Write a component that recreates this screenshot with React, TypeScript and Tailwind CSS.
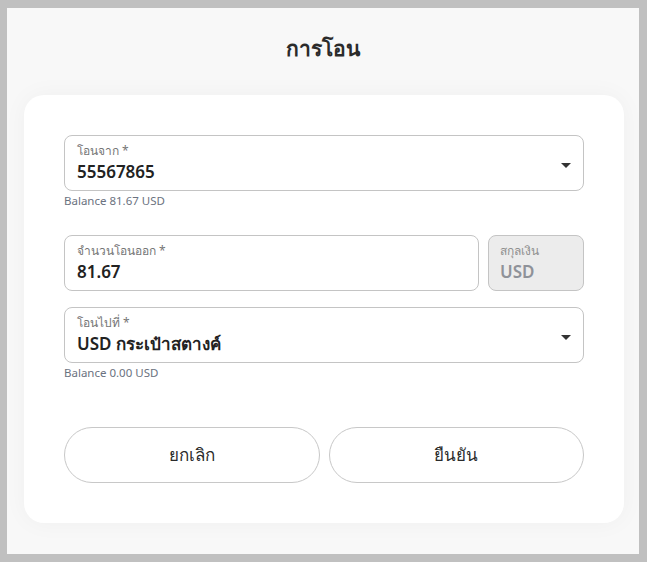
function Caret() {
  return (
    <svg width="10" height="5" viewBox="0 0 10 5" className="mt-[4px] text-[#333]">
      <path d="M0 0h10L5 5z" fill="currentColor" />
    </svg>
  );
}

function SelectField({ label, value }: { label: string; value: string }) {
  return (
    <div className="flex h-[56px] items-center justify-between rounded-[8px] border border-[#c4c4c4] bg-white pl-[12px] pr-[12px]">
      <div className="flex flex-col">
        <span className="text-[12px] leading-[14px] text-[#757575]">{label}</span>
        <span className="mt-[2px] text-[17px] font-semibold leading-[23px] text-[#222]">{value}</span>
      </div>
      <Caret />
    </div>
  );
}

export default function App() {
  return (
    <div className="h-[562px] w-[647px] bg-[#c0c0c0] pb-[8px] pl-[7px] pr-[8px] pt-[8px]" style={{ fontFamily: '"Noto Sans", "Open Sans", sans-serif' }}>
      <div className="flex h-full flex-col bg-[#f8f8f8]">
        <h1 className="flex h-[87px] items-center justify-center pb-[6px] text-[21px] font-bold text-[#2b2b2b]">การโอน</h1>
        <div className="ml-[17px] mr-[15px] flex flex-col rounded-[20px] bg-white px-[40px] pb-[40px] pt-[40px] shadow-[0_0_24px_rgba(0,0,0,0.04)]">
          <SelectField label="โอนจาก *" value="55567865" />
          <p className="mt-[3px] text-[11.5px] leading-[14px] text-[#6b7280]">Balance 81.67 USD</p>

          <div className="mt-[27px] flex gap-[9px]">
            <div className="flex h-[56px] flex-1 flex-col justify-center rounded-[8px] border border-[#c4c4c4] px-[12px]">
              <span className="text-[12px] leading-[14px] text-[#757575]">จำนวนโอนออก *</span>
              <span className="mt-[2px] text-[17px] font-semibold leading-[23px] text-[#222]">81.67</span>
            </div>
            <div className="flex h-[56px] w-[96px] flex-col justify-center rounded-[8px] border border-[#c4c4c4] bg-[#ececec] px-[11px]">
              <span className="text-[12px] leading-[14px] text-[#8f8f8f]">สกุลเงิน</span>
              <span className="mt-[2px] text-[17px] font-semibold leading-[23px] text-[#8f9299]">USD</span>
            </div>
          </div>

          <div className="mt-[16px]">
            <SelectField label="โอนไปที่ *" value="USD กระเป๋าสตางค์" />
          </div>
          <p className="mt-[3px] text-[11.5px] leading-[14px] text-[#6b7280]">Balance 0.00 USD</p>

          <div className="mt-[47px] flex gap-[9px]">
            <button className="h-[56px] flex-1 rounded-full border border-[#c8c8c8] bg-white text-[17px] text-[#2b2b2b]">ยกเลิก</button>
            <button className="h-[56px] flex-1 rounded-full border border-[#c8c8c8] bg-white text-[17px] text-[#2b2b2b]">ยืนยัน</button>
          </div>
        </div>
      </div>
    </div>
  );
}
